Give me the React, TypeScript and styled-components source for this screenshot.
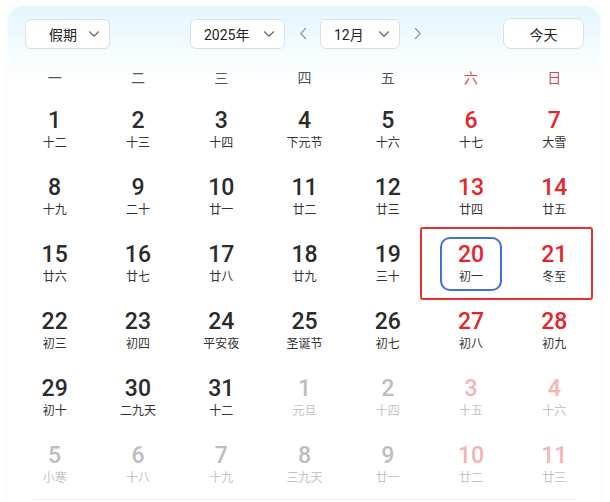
import React from "react";
import styled, { createGlobalStyle, css } from "styled-components";

const GlobalStyle = createGlobalStyle`
  html, body {
    margin: 0;
    padding: 0;
    background: #fff;
    font-family: Roboto, "Noto Sans CJK SC", "Noto Sans", sans-serif;
  }
`;

type Day = {
  n: number;
  lunar: string;
  weekend?: boolean;
  other?: boolean;
  selected?: boolean;
};

const WEEKDAYS = ["一", "二", "三", "四", "五", "六", "日"];

const LUNAR: string[][] = [
  ["十二", "十三", "十四", "下元节", "十六", "十七", "大雪"],
  ["十九", "二十", "廿一", "廿二", "廿三", "廿四", "廿五"],
  ["廿六", "廿七", "廿八", "廿九", "三十", "初一", "冬至"],
  ["初三", "初四", "平安夜", "圣诞节", "初七", "初八", "初九"],
  ["初十", "二九天", "十二", "元旦", "十四", "十五", "十六"],
  ["小寒", "十八", "十九", "三九天", "廿一", "廿二", "廿三"],
];

// Dec 2025 starts on a Monday, 31 days
const buildDays = (): Day[] => {
  const days: Day[] = [];
  for (let i = 0; i < 42; i++) {
    const row = Math.floor(i / 7);
    const col = i % 7;
    const other = i >= 31;
    days.push({
      n: other ? i - 30 : i + 1,
      lunar: LUNAR[row][col],
      weekend: col >= 5,
      other,
      selected: i === 19,
    });
  }
  return days;
};

const Chevron = () => (
  <svg width="12" height="8" viewBox="0 0 12 8" fill="none">
    <path d="M1.5 1.8 6 6.2l4.5-4.4" stroke="#666" strokeWidth="1.2" strokeLinecap="round" strokeLinejoin="round" />
  </svg>
);

const Arrow = ({ dir }: { dir: "left" | "right" }) => (
  <svg width="8" height="13" viewBox="0 0 8 13" fill="none">
    <path
      d={dir === "left" ? "M6.5 1.5 1.8 6.5l4.7 5" : "M1.5 1.5l4.7 5-4.7 5"}
      stroke="#999"
      strokeWidth="1.3"
      strokeLinecap="round"
      strokeLinejoin="round"
    />
  </svg>
);

const App = () => {
  const days = buildDays();
  return (
    <>
      <GlobalStyle />
      <Card>
        <Toolbar>
          <Left>
            <Select $w={85} $pl={23}>
              <span>假期</span>
              <Chevron />
            </Select>
          </Left>
          <Center>
            <Select $w={95} $pl={13}>
              <span>2025年</span>
              <Chevron />
            </Select>
            <NavButton><Arrow dir="left" /></NavButton>
            <Select $w={80} $pl={13}>
              <span>12月</span>
              <Chevron />
            </Select>
            <NavButton><Arrow dir="right" /></NavButton>
          </Center>
          <Right>
            <TodayButton>今天</TodayButton>
          </Right>
        </Toolbar>

        <WeekHeader>
          {WEEKDAYS.map((w, i) => (
            <WeekLabel key={w} $weekend={i >= 5}>{w}</WeekLabel>
          ))}
        </WeekHeader>

        <Grid>
          {days.map((d, i) => (
            <Cell key={i}>
              <DayBox $selected={d.selected}>
                <Num $weekend={d.weekend} $other={d.other}>{d.n}</Num>
                <Lunar $other={d.other}>{d.lunar}</Lunar>
              </DayBox>
            </Cell>
          ))}
          <Highlight />
        </Grid>
        <Divider />
      </Card>
    </>
  );
};

const Card = styled.div`
  margin: 6px 10px 0 8px;
  width: 592px;
  height: 496px;
  box-sizing: border-box;
  border-radius: 16px 16px 0 0;
  background: linear-gradient(180deg, #e4f5fe 0px, #f3fbff 40px, #ffffff 75px);
  box-shadow: 0 0 8px rgba(0, 0, 0, 0.05);
  overflow: hidden;
`;

const Toolbar = styled.div`
  display: grid;
  grid-template-columns: 1fr auto 1fr;
  align-items: center;
  padding: 12px 16px 0 17px;
  height: 31px;
`;

const Left = styled.div`
  display: flex;
`;

const Center = styled.div`
  display: flex;
  align-items: center;
  padding-left: 16px;
`;

const Right = styled.div`
  display: flex;
  justify-content: flex-end;
`;

const Select = styled.div<{ $w: number; $pl: number }>`
  width: ${(p) => p.$w}px;
  height: 30px;
  box-sizing: border-box;
  display: flex;
  align-items: center;
  justify-content: space-between;
  padding: 0 9px 0 ${(p) => p.$pl}px;
  background: #fff;
  border: 1px solid #dcdfe6;
  border-radius: 6px;
  font-size: 14px;
  color: #222;
`;

const NavButton = styled.div`
  width: 35px;
  display: flex;
  justify-content: center;
  align-items: center;
`;

const TodayButton = styled.div`
  width: 81px;
  height: 31px;
  box-sizing: border-box;
  display: flex;
  align-items: center;
  justify-content: center;
  background: #fff;
  border: 1px solid #dcdfe6;
  border-radius: 8px;
  font-size: 14px;
  color: #222;
`;

const WeekHeader = styled.div`
  display: grid;
  grid-template-columns: repeat(7, 1fr);
  margin: 11px 4px 0 5px;
  height: 34px;
  align-items: center;
`;

const WeekLabel = styled.div<{ $weekend: boolean }>`
  text-align: center;
  font-size: 14px;
  color: ${(p) => (p.$weekend ? "#d9484a" : "#555")};
`;

const Grid = styled.div`
  position: relative;
  display: grid;
  grid-template-columns: repeat(7, 1fr);
  grid-auto-rows: 67px;
  margin: 2px 4px 0 5px;
`;

const Cell = styled.div`
  display: flex;
  align-items: center;
  justify-content: center;
`;

const DayBox = styled.div<{ $selected?: boolean }>`
  width: 62px;
  height: 54px;
  box-sizing: border-box;
  display: flex;
  flex-direction: column;
  align-items: center;
  justify-content: center;
  border-radius: 10px;
  border: 2px solid transparent;
  ${(p) =>
    p.$selected &&
    css`
      border-color: #4271d6;
    `}
`;

const Num = styled.div<{ $weekend?: boolean; $other?: boolean }>`
  font-family: Roboto, "Noto Sans", sans-serif;
  font-size: 23px;
  line-height: 22px;
  margin-bottom: 3px;
  font-weight: 500;
  color: ${(p) =>
    p.$other ? (p.$weekend ? "#f5b3b3" : "#bdbdbd") : p.$weekend ? "#e4262c" : "#2b2b2b"};
`;

const Lunar = styled.div<{ $other?: boolean }>`
  font-family: "Noto Sans CJK SC", sans-serif;
  font-size: 12px;
  line-height: 14px;
  color: ${(p) => (p.$other ? "#c4c4c4" : "#333")};
`;

const Highlight = styled.div`
  position: absolute;
  left: 407px;
  top: 131px;
  width: 173px;
  height: 73px;
  box-sizing: border-box;
  border: 2px solid #e8312b;
  border-radius: 3px;
  pointer-events: none;
`;

const Divider = styled.div`
  margin: 1px 23px 0 25px;
  border-top: 1px solid #eeeeee;
`;

export default App;
